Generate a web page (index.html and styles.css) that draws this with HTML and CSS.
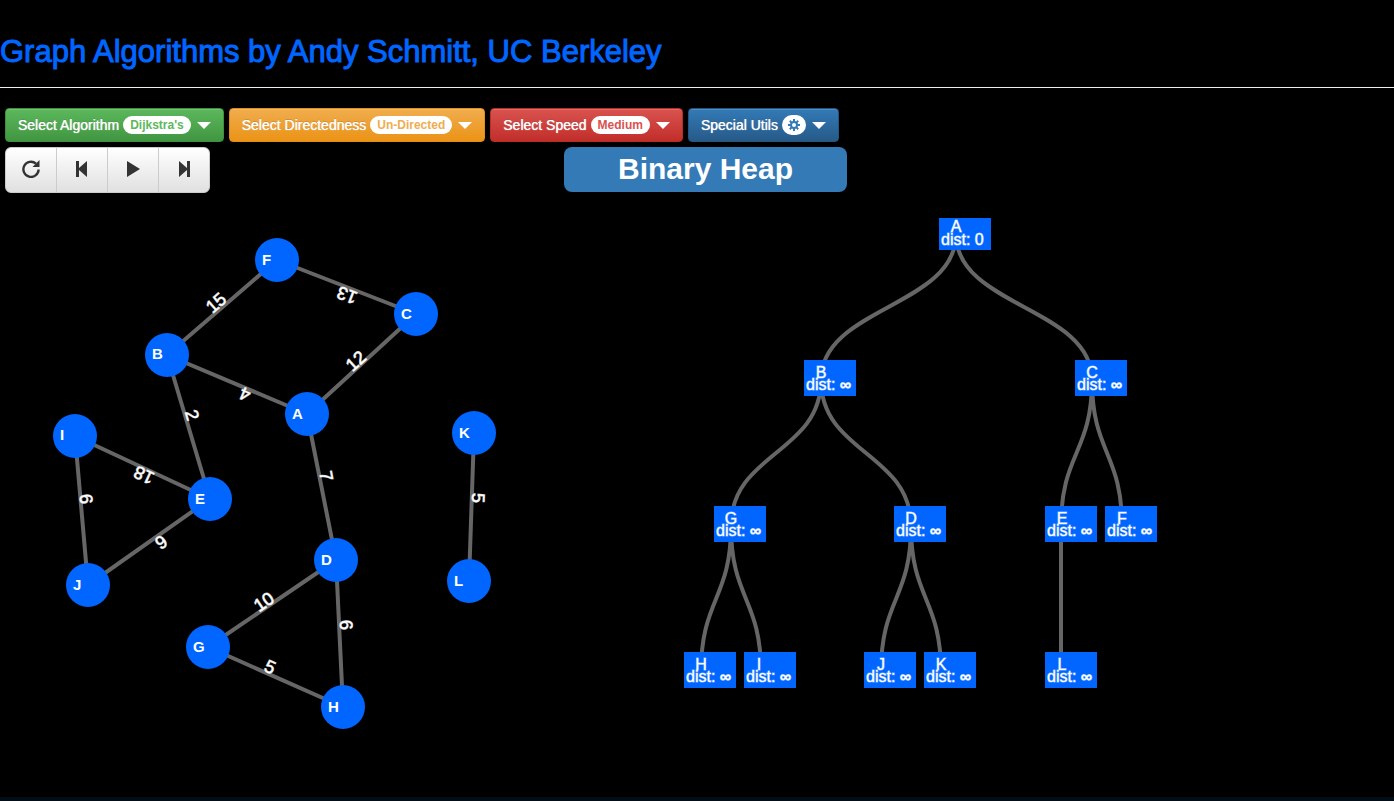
FILE: index.html
```html
<!DOCTYPE html>
<html lang="en">
<head>
<meta charset="utf-8">
<meta name="viewport" content="width=device-width, initial-scale=1">
<title>Graph Algorithms</title>
<link rel="stylesheet" href="styles.css">
</head>
<body>
<header class="page-header">
  <h1 class="title">Graph Algorithms by Andy Schmitt, UC Berkeley</h1>
</header>
<nav class="toolbar" aria-label="Options">
  <button type="button" class="btn btn-success">Select Algorithm <span class="badge">Dijkstra's</span><span class="caret"></span></button>
  <button type="button" class="btn btn-warning">Select Directedness <span class="badge">Un-Directed</span><span class="caret"></span></button>
  <button type="button" class="btn btn-danger">Select Speed <span class="badge">Medium</span><span class="caret"></span></button>
  <button type="button" class="btn btn-primary">Special Utils <span class="badge badge-icon"><svg class="gear" viewBox="0 0 12 12" aria-hidden="true"><circle cx="6" cy="6" r="3" fill="none" stroke="currentColor" stroke-width="2"/><path d="M6 0v2.500M6 9.500V12M0 6h2.500M9.500 6H12M1.800 1.800l1.800 1.800M8.400 8.400l1.800 1.800M1.800 10.200l1.800-1.800M8.400 3.600l1.800-1.800" stroke="currentColor" stroke-width="2"/></svg></span><span class="caret"></span></button>
</nav>
<main class="workspace">
  <div class="playback" role="group" aria-label="Playback">
    <button type="button" class="play-btn" aria-label="Restart"><svg class="icon" viewBox="0 0 18 18"><path d="M14 3.600A7.600 7.600 0 1 0 16.600 9.500" fill="none" stroke="currentColor" stroke-width="2.400"/><path d="M17.500 0v7h-7z" fill="currentColor"/></svg></button>
    <button type="button" class="play-btn" aria-label="Step backward"><svg class="icon" viewBox="0 0 18 18"><path d="M3 1h3v7l8-7v16l-8-7v7H3z" fill="currentColor"/></svg></button>
    <button type="button" class="play-btn" aria-label="Play"><svg class="icon" viewBox="0 0 18 18"><path d="M3 1l13 8-13 8z" fill="currentColor"/></svg></button>
    <button type="button" class="play-btn" aria-label="Step forward"><svg class="icon" viewBox="0 0 18 18"><path d="M15 1h-3v7L4 1v16l8-7v7h3z" fill="currentColor"/></svg></button>
  </div>
  <h2 class="heap-label">Binary Heap</h2>

  <svg class="canvas" viewBox="0 193 564 604" role="img" aria-label="Weighted graph">
    <g class="edge">
      <path d="M167 355L277 260M416 314L277 260M307 414L416 314M307 414L167 355M167 355L210 499M210 499L75 436M75 436L88 585M210 499L88 585M307 414L336 560M336 560L208 647M336 560L343 707M208 647L343 707M474 433L469 581"/>
    </g>
    <g class="weight">
      <text transform="translate(216 303) rotate(-41)" dy="6">15</text>
      <text transform="translate(347 295) rotate(201)" dy="6">13</text>
      <text transform="translate(356 361) rotate(-42)" dy="6">12</text>
      <text transform="translate(245 394) rotate(203)" dy="6">4</text>
      <text transform="translate(192 415) rotate(73)" dy="6">2</text>
      <text transform="translate(144 475) rotate(205)" dy="6">18</text>
      <text transform="translate(86 499) rotate(85)" dy="6">6</text>
      <text transform="translate(161 542) rotate(145)" dy="6">6</text>
      <text transform="translate(326 476) rotate(79)" dy="6">7</text>
      <text transform="translate(264 602) rotate(-34)" dy="6">10</text>
      <text transform="translate(346 625) rotate(87)" dy="6">6</text>
      <text transform="translate(270 667) rotate(24)" dy="6">5</text>
      <text transform="translate(478 498) rotate(92)" dy="6">5</text>
    </g>
    <g class="vertex">
      <circle cx="277" cy="260" r="22"/><text x="262" y="265">F</text>
      <circle cx="416" cy="314" r="22"/><text x="401" y="319">C</text>
      <circle cx="167" cy="355" r="22"/><text x="152" y="359">B</text>
      <circle cx="307" cy="414" r="22"/><text x="292" y="419">A</text>
      <circle cx="75" cy="436" r="22"/><text x="60" y="440">I</text>
      <circle cx="210" cy="499" r="22"/><text x="195" y="504">E</text>
      <circle cx="88" cy="585" r="22"/><text x="73" y="590">J</text>
      <circle cx="474" cy="433" r="22"/><text x="459" y="438">K</text>
      <circle cx="469" cy="581" r="22"/><text x="454" y="586">L</text>
      <circle cx="336" cy="560" r="22"/><text x="321" y="565">D</text>
      <circle cx="208" cy="647" r="22"/><text x="193" y="652">G</text>
      <circle cx="343" cy="707" r="22"/><text x="328" y="712">H</text>
    </g>
  </svg>

  <svg class="canvas" viewBox="564 193 830 604" role="img" aria-label="Binary heap tree">
    <g class="edge">
      <path d="M956 234C956 307 821 307 821 380M956 234C956 307 1092 307 1092 380"/>
      <path d="M821 380C821 453 731 453 731 526M821 380C821 453 911 453 911 526M1092 380C1092 453 1061 453 1061 526M1092 380C1092 453 1122 453 1122 526"/>
      <path d="M731 526C731 599 701 599 701 672M731 526C731 599 761 599 761 672M911 526C911 599 881 599 881 672M911 526C911 599 941 599 941 672M1061 526V672"/>
    </g>
    <g class="heap-node" transform="translate(956 234)"><rect x="-17" y="-16" width="52" height="32"/><text class="key" y="-2">A</text><text x="-15" y="11">dist: 0</text></g>
    <g class="heap-node" transform="translate(821 380)"><rect x="-17" y="-20" width="52" height="36"/><text class="key" y="-2">B</text><text x="-15" y="10">dist: <tspan class="inf">∞</tspan></text></g>
    <g class="heap-node" transform="translate(1092 380)"><rect x="-17" y="-20" width="52" height="36"/><text class="key" y="-2">C</text><text x="-15" y="10">dist: <tspan class="inf">∞</tspan></text></g>
    <g class="heap-node" transform="translate(731 526)"><rect x="-17" y="-20" width="52" height="36"/><text class="key" y="-2">G</text><text x="-15" y="10">dist: <tspan class="inf">∞</tspan></text></g>
    <g class="heap-node" transform="translate(911 526)"><rect x="-17" y="-20" width="52" height="36"/><text class="key" y="-2">D</text><text x="-15" y="10">dist: <tspan class="inf">∞</tspan></text></g>
    <g class="heap-node" transform="translate(1062 526)"><rect x="-17" y="-20" width="52" height="36"/><text class="key" y="-2">E</text><text x="-15" y="10">dist: <tspan class="inf">∞</tspan></text></g>
    <g class="heap-node" transform="translate(1122 526)"><rect x="-17" y="-20" width="52" height="36"/><text class="key" y="-2">F</text><text x="-15" y="10">dist: <tspan class="inf">∞</tspan></text></g>
    <g class="heap-node" transform="translate(701 672)"><rect x="-17" y="-20" width="52" height="36"/><text class="key" y="-2">H</text><text x="-15" y="10">dist: <tspan class="inf">∞</tspan></text></g>
    <g class="heap-node" transform="translate(761 672)"><rect x="-17" y="-20" width="52" height="36"/><text class="key" x="-2" y="-2">I</text><text x="-15" y="10">dist: <tspan class="inf">∞</tspan></text></g>
    <g class="heap-node" transform="translate(881 672)"><rect x="-17" y="-20" width="52" height="36"/><text class="key" y="-2">J</text><text x="-15" y="10">dist: <tspan class="inf">∞</tspan></text></g>
    <g class="heap-node" transform="translate(941 672)"><rect x="-17" y="-20" width="52" height="36"/><text class="key" y="-2">K</text><text x="-15" y="10">dist: <tspan class="inf">∞</tspan></text></g>
    <g class="heap-node" transform="translate(1062 672)"><rect x="-17" y="-20" width="52" height="36"/><text class="key" y="-2">L</text><text x="-15" y="10">dist: <tspan class="inf">∞</tspan></text></g>
  </svg>
</main>
<footer class="footer"></footer>
</body>
</html>
```
FILE: styles.css
```css
* { box-sizing: border-box; }

body {
  margin: 0;
  background: #000;
  color: #fff;
  font-family: "Liberation Sans", Arial, sans-serif;
  font-size: 14px;
  line-height: 20px;
}

.page-header {
  padding: 32px 0 16px;
  border-bottom: 1px solid #eee;
}

.title {
  margin: 0;
  color: #06f;
  font-size: 31px;
  font-weight: 400;
  line-height: 39px;
  -webkit-text-stroke: 1px #06f;
}

.toolbar {
  display: flex;
  flex-wrap: wrap;
  gap: 5px;
  padding: 20px 5px 5px;
}

.btn {
  display: flex;
  align-items: center;
  gap: 4px;
  padding: 6px 12px;
  border: 1px solid;
  border-radius: 4px;
  color: #fff;
  font: inherit;
  text-shadow: 0 0 1px #fff, 0 -1px 0 rgba(0, 0, 0, .2);
  box-shadow: inset 0 1px 0 rgba(255, 255, 255, .15);
  white-space: nowrap;
}

.btn-success { --tone: #5cb85c; background: linear-gradient(#5cb85c, #419641); border-color: #3e8f3e; }
.btn-warning { --tone: #f0ad4e; background: linear-gradient(#f0ad4e, #eb9316); border-color: #e38d13; }
.btn-danger { --tone: #d9534f; background: linear-gradient(#d9534f, #c12e2a); border-color: #b92c28; }
.btn-primary { --tone: #337ab7; background: linear-gradient(#337ab7, #265a88); border-color: #245580; }

.badge {
  padding: 3px 7px;
  border-radius: 10px;
  background: #fff;
  color: var(--tone);
  font-size: 12px;
  font-weight: 700;
  line-height: 12px;
  text-shadow: none;
}

.badge-icon { padding: 4px 6px; }

.gear {
  display: block;
  width: 12px;
  height: 12px;
}

.caret {
  margin-left: 2px;
  border-top: 7px solid;
  border-left: 7px solid transparent;
  border-right: 7px solid transparent;
}

.workspace {
  display: grid;
  grid-template-columns: 564fr 830fr;
}

.playback {
  display: flex;
  padding-left: 5px;
}

.play-btn {
  display: flex;
  align-items: center;
  justify-content: center;
  width: 52px;
  height: 46px;
  margin-right: -1px;
  padding: 0 0 2px;
  border: 1px solid #ccc;
  background: linear-gradient(#fff, #e0e0e0);
  color: #333;
}

.play-btn:first-child { border-radius: 6px 0 0 6px; }
.play-btn:last-child { border-radius: 0 6px 6px 0; }

.icon {
  width: 18px;
  height: 18px;
}

.heap-label {
  justify-self: start;
  margin: 0 0 1px;
  padding: 4px 54px 6px;
  border-radius: 8px;
  background: #337ab7;
  font-size: 30px;
  font-weight: 700;
  line-height: 35px;
}

.canvas {
  display: block;
  width: 100%;
  height: auto;
}

.edge {
  fill: none;
  stroke: #666;
  stroke-width: 4px;
}

.weight {
  fill: #fff;
  font-size: 18px;
  text-anchor: middle;
  stroke: #fff;
  stroke-opacity: .7;
}

.vertex { fill: #06f; }

.vertex text {
  fill: #fff;
  font-size: 15px;
  font-weight: 700;
}

.heap-node { fill: #06f; }

.heap-node text {
  fill: #fff;
  stroke: #fff;
  stroke-opacity: .5;
  font-size: 16px;
}

.heap-node .key { text-anchor: middle; }
.inf { font-weight: 700; }

.footer {
  height: 4px;
  background: #020d18;
}
```
